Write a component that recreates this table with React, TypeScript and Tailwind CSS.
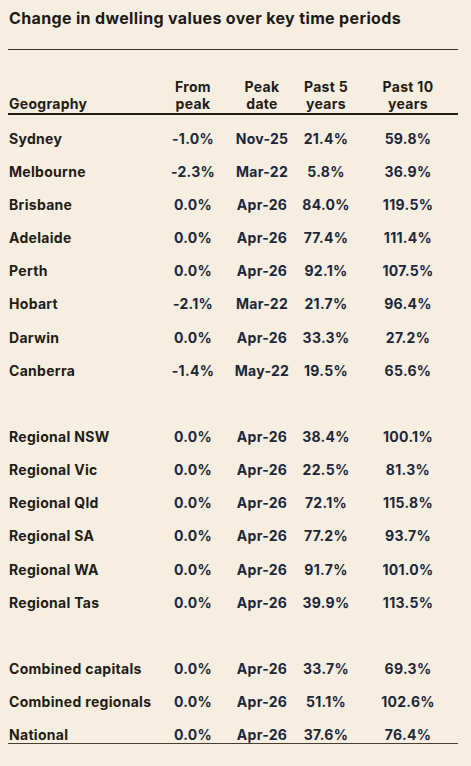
import React from "react";

type Row = [string, string, string, string, string] | null;

const rows: Row[] = [
  ["Sydney", "-1.0%", "Nov-25", "21.4%", "59.8%"],
  ["Melbourne", "-2.3%", "Mar-22", "5.8%", "36.9%"],
  ["Brisbane", "0.0%", "Apr-26", "84.0%", "119.5%"],
  ["Adelaide", "0.0%", "Apr-26", "77.4%", "111.4%"],
  ["Perth", "0.0%", "Apr-26", "92.1%", "107.5%"],
  ["Hobart", "-2.1%", "Mar-22", "21.7%", "96.4%"],
  ["Darwin", "0.0%", "Apr-26", "33.3%", "27.2%"],
  ["Canberra", "-1.4%", "May-22", "19.5%", "65.6%"],
  null,
  ["Regional NSW", "0.0%", "Apr-26", "38.4%", "100.1%"],
  ["Regional Vic", "0.0%", "Apr-26", "22.5%", "81.3%"],
  ["Regional Qld", "0.0%", "Apr-26", "72.1%", "115.8%"],
  ["Regional SA", "0.0%", "Apr-26", "77.2%", "93.7%"],
  ["Regional WA", "0.0%", "Apr-26", "91.7%", "101.0%"],
  ["Regional Tas", "0.0%", "Apr-26", "39.9%", "113.5%"],
  null,
  ["Combined capitals", "0.0%", "Apr-26", "33.7%", "69.3%"],
  ["Combined regionals", "0.0%", "Apr-26", "51.1%", "102.6%"],
];

const cols = "grid grid-cols-[156px_58px_80px_48px_108px]";

function Cells({ r }: { r: [string, string, string, string, string] }) {
  return (
    <>
      <div className="pl-px text-[#221c15] whitespace-nowrap">{r[0]}</div>
      <div className="text-center text-[#1c2739] whitespace-nowrap">{r[1]}</div>
      <div className="text-center text-[#1c2739] whitespace-nowrap">{r[2]}</div>
      <div className="text-center text-[#1c2739] whitespace-nowrap">{r[3]}</div>
      <div className="pl-2 text-center text-[#1c2739] whitespace-nowrap">{r[4]}</div>
    </>
  );
}

export default function App() {
  return (
    <div className="w-[471px] h-[766px] bg-[#f7eee2] overflow-hidden font-['Inter','Liberation_Sans',Arial,sans-serif] font-bold">
      <h1 className="pt-[7px] pl-[9px] text-[16px] leading-[22px] text-[#1d1a16] tracking-[0.35px]">
        Change in dwelling values over key time periods
      </h1>
      <div className="ml-2 w-[450px] mt-[20px] border-t-[1.5px] border-[#3b332b]" />
      <div className="ml-2 w-[450px] text-[14px] tracking-[0.3px]">
        <div className={`${cols} items-end h-[65px] leading-[17px] border-b-2 border-[#231d17] pb-px text-[#221c15]`}>
          <div className="pl-px">Geography</div>
          <div className="text-center">From<br />peak</div>
          <div className="text-center">Peak<br />date</div>
          <div className="text-center">Past 5<br />years</div>
          <div className="pl-2 text-center">Past 10<br />years</div>
        </div>
        <div className="pt-[7px]">
          {rows.map((r, i) =>
            r ? (
              <div key={i} className={`${cols} h-[33.17px] items-center leading-[16px]`}>
                <Cells r={r} />
              </div>
            ) : (
              <div key={i} className="h-[33.17px]" />
            )
          )}
          <div className={`${cols} h-[25px] items-end leading-[16px] border-b-[1.5px] border-[#4a3f35]`}>
            <Cells r={["National", "0.0%", "Apr-26", "37.6%", "76.4%"]} />
          </div>
        </div>
      </div>
    </div>
  );
}
